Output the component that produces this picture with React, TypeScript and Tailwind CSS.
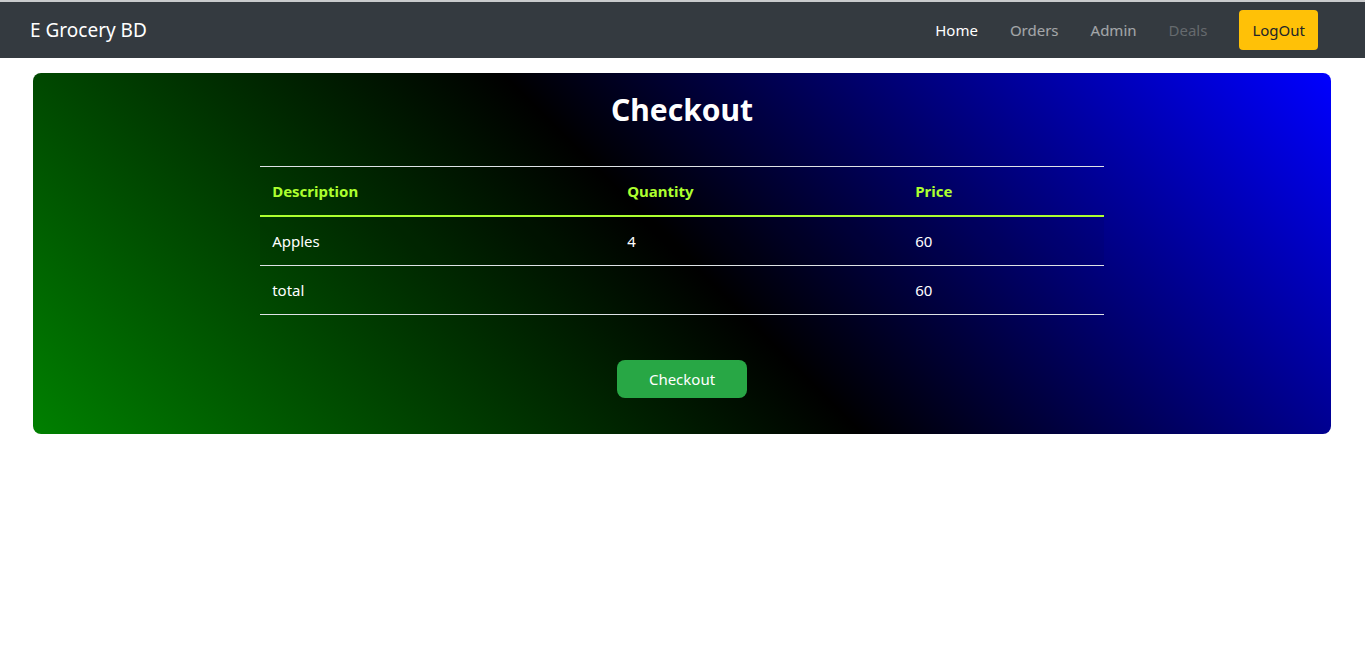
export default function App() {
  const links = [
    { label: "Home", cls: "text-white" },
    { label: "Orders", cls: "text-white/55" },
    { label: "Admin", cls: "text-white/55" },
    { label: "Deals", cls: "text-white/25" },
  ];

  return (
    <div className="min-h-[657px] bg-white font-['Noto_Sans',sans-serif]">
      {/* Navbar */}
      <div className="h-[2px] bg-[#c9cbcd]" />
      <nav className="flex h-14 items-center justify-between bg-[#343a40] pl-[30px] pr-[47px]">
        <span className="text-[19px] text-white">E Grocery BD</span>
        <div className="flex items-center">
          {links.map((l) => (
            <a key={l.label} href="#" className={`px-4 text-[15px] ${l.cls}`}>
              {l.label}
            </a>
          ))}
          <button className="ml-4 h-10 rounded bg-[#ffc107] px-[13px] text-[15px] text-[#212529]">
            LogOut
          </button>
        </div>
      </nav>

      {/* Checkout card */}
      <div className="pl-[33px] pr-[34px] pt-[15px]">
        <div className="rounded-lg bg-[linear-gradient(45deg,#008000,#000000,#0000ff)] pb-9 pt-[15px] text-white">
          <h1 className="text-center text-[30px] font-bold leading-[44px]">Checkout</h1>
          <table className="mx-auto mt-[34px] w-[65%] border-t border-[#dee2e6] text-[15px]">
            <thead>
              <tr className="h-[49px] border-b-2 border-[#adff2f] text-left text-[#adff2f]">
                <th className="px-3 font-bold">Description</th>
                <th className="px-3 font-bold">Quantity</th>
                <th className="px-3 font-bold">Price</th>
              </tr>
            </thead>
            <tbody>
              <tr className="h-[50px] border-b border-[#dee2e6] bg-black/5">
                <td className="w-[355px] px-3">Apples</td>
                <td className="w-[288px] px-3">4</td>
                <td className="px-3">60</td>
              </tr>
              <tr className="h-[49px] border-b border-[#dee2e6]">
                <td className="px-3">total</td>
                <td className="px-3"></td>
                <td className="px-3">60</td>
              </tr>
            </tbody>
          </table>
          <div className="mt-[45px] flex justify-center">
            <button className="h-[38px] w-[130px] rounded-lg bg-[#28a745] text-[15px] text-white">
              Checkout
            </button>
          </div>
        </div>
      </div>
    </div>
  );
}
